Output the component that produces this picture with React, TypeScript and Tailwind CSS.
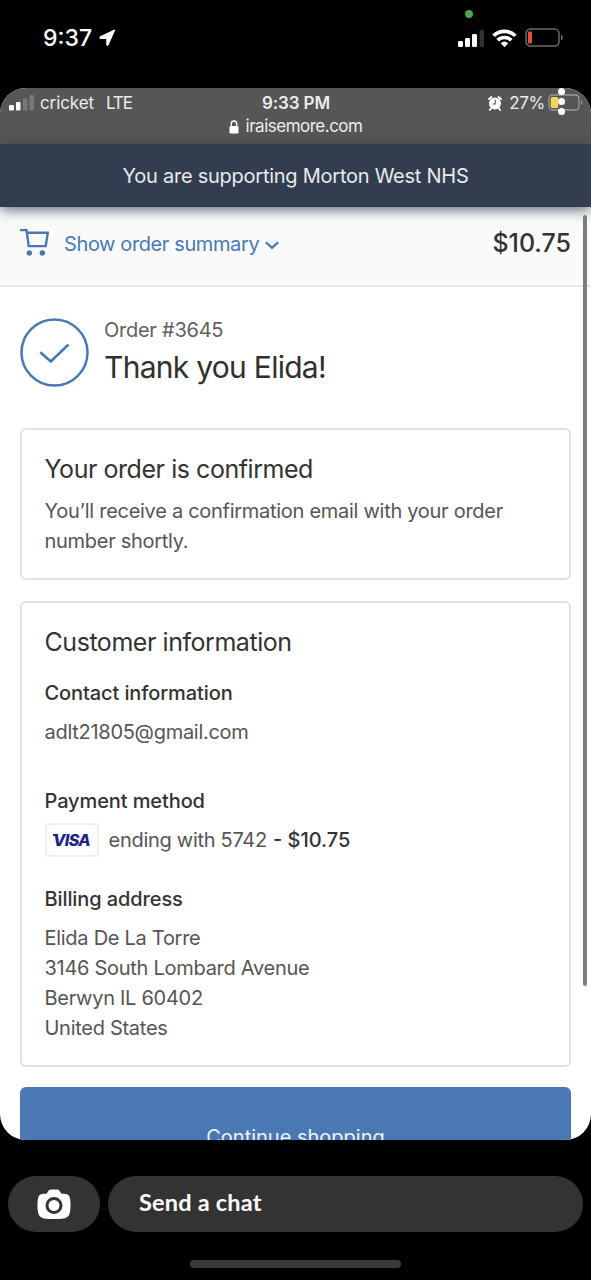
import type { ReactNode } from 'react';

const ADDRESS = ['Elida De La Torre', '3146 South Lombard Avenue', 'Berwyn IL 60402', 'United States'];

function PhoneStatusBar() {
    return (
        <div className="relative flex h-[88px] shrink-0 items-start justify-between pl-[43px] pr-[27px] pt-[23px] text-white">
            <div className="absolute left-[465px] top-[10px] h-[8px] w-[8px] rounded-full bg-[#4ca64c]" />
            <div className="flex h-[30px] items-center">
                <span className="text-[23px] font-medium">9:37</span>
                <svg className="ml-[7px] mt-[-1px]" width="17" height="17" viewBox="0 0 17 17">
                    <path d="M15.800.900 9 16.200H7.800V9.500H1V7.800Z" fill="#fff" stroke="#fff" strokeWidth="1" strokeLinejoin="round" />
                </svg>
            </div>
            <div className="flex h-[30px] items-center">
                <svg width="26" height="17" viewBox="0 0 26 17" fill="#fff">
                    <rect x="0" y="11" width="5" height="6" rx="1.200" />
                    <rect x="7" y="8" width="5" height="9" rx="1.200" />
                    <rect x="14" y="4" width="5" height="13" rx="1.200" />
                    <rect x="21.500" y="0" width="4.500" height="17" rx="1.200" fill="#333" />
                </svg>
                <svg className="ml-[8px]" width="25" height="19" viewBox="0 0 25 19" fill="none" stroke="#fff" strokeWidth="3.700">
                    <path d="M1.600 6.800a15.600 15.600 0 0 1 21.800 0" />
                    <path d="M5.700 11.300a9.700 9.700 0 0 1 13.600 0" />
                    <path d="M12.500 18.300 8.700 14.300a5.700 5.700 0 0 1 7.600 0Z" fill="#fff" stroke="none" />
                </svg>
                <svg className="ml-[8px] mt-[-1px]" width="39" height="19" viewBox="0 0 39 19">
                    <rect x="1" y="1" width="33" height="17" rx="4.500" fill="none" stroke="#6a6a6a" strokeWidth="1.500" />
                    <rect x="3" y="3.500" width="4" height="12" rx="1.200" fill="#ea4b3c" />
                    <path d="M36 6.500c2.200.8 2.200 5.200 0 6Z" fill="#6a6a6a" />
                </svg>
            </div>
        </div>
    );
}

function BrowserBar() {
    return (
        <div className="relative h-[56px] bg-[#565656] pt-[1px] text-[#ececec]">
            <div className="grid h-[29px] grid-cols-3 items-center pl-[9px] pr-[8px]">
                <div className="flex items-center text-[17px]">
                    <svg className="mt-[-2px]" width="25" height="16" viewBox="0 0 25 16" fill="#fff">
                        <rect x="0" y="10" width="5" height="5.500" rx="1" />
                        <rect x="7" y="7" width="4.500" height="8.500" rx="1" />
                        <rect x="14" y="3.500" width="4.500" height="12" rx="1" fill="#777" />
                        <rect x="20.500" y="0" width="4.500" height="15.500" rx="1" fill="#777" />
                    </svg>
                    <span className="ml-[6px] tracking-[-0.1px]">cricket</span>
                    <span className="ml-[12px] tracking-[-1.1px]">LTE</span>
                </div>
                <span className="text-center text-[17px] font-semibold tracking-[-0.1px]">9:33 PM</span>
                <div className="flex items-center justify-end text-[17px]">
                    <svg className="mt-[-1px]" width="14" height="15" viewBox="0 0 14 15">
                        <path d="M1 3 3.500 1M13 3 10.500 1M3 12.500 1.800 14M11 12.500l1.200 1.500" stroke="#fff" strokeWidth="1.800" strokeLinecap="round" />
                        <circle cx="7" cy="7.500" r="6" fill="#fff" />
                        <path d="M7.300 3.800v4.200H4.300" fill="none" stroke="#666" strokeWidth="1.200" />
                    </svg>
                    <span className="ml-[7px] tracking-[-0.3px]">27%</span>
                    <svg className="ml-[3px] mt-[-2px]" width="35" height="17" viewBox="0 0 35 17">
                        <rect x="1" y="1" width="30" height="15" rx="3.500" fill="none" stroke="#999" strokeWidth="1.300" />
                        <rect x="2.800" y="3" width="7.500" height="11" rx="1.500" fill="#f3d65a" />
                        <path d="M33 6c1.800.7 1.800 4.300 0 5Z" fill="#999" />
                    </svg>
                </div>
            </div>
            <div className="flex h-[18px] items-center justify-center text-[17px]">
                <svg className="mr-[7px]" width="10" height="14" viewBox="0 0 10 14">
                    <rect x="0.500" y="6" width="9" height="7.500" rx="1.300" fill="#fff" />
                    <path d="M2.300 6.500V3.700a2.700 2.700 0 0 1 5.400 0v2.800" fill="none" stroke="#fff" strokeWidth="1.300" />
                </svg>
                <span className="tracking-[-0.5px]">iraisemore.com</span>
            </div>
            {/* overflow menu dots sit above the battery */}
            <div className="absolute right-[26px] top-0 flex flex-col gap-[3px]">
                <i className="h-[7px] w-[7px] rounded-full bg-white" />
                <i className="h-[7px] w-[7px] rounded-full bg-white" />
                <i className="h-[7px] w-[7px] rounded-full bg-white" />
            </div>
        </div>
    );
}

function OrderSummary() {
    return (
        <div className="flex h-[80px] items-start justify-between border-b-2 border-[#e6e6e6] bg-[#fafafa] px-5 pt-[21px] leading-[30px]">
            <div className="flex items-center pt-[1px] text-[#4a78b5]">
                <svg width="29" height="29" viewBox="0 0 29 29" className="mt-[-4px]" fill="none" stroke="currentColor" strokeWidth="2.400">
                    <path d="M0 2.100h6.500l2.200 16h17l2.100-13.400H7" />
                    <circle cx="9.300" cy="25" r="2.700" fill="currentColor" stroke="none" />
                    <circle cx="22.300" cy="25" r="2.700" fill="currentColor" stroke="none" />
                </svg>
                <span className="ml-[15px] text-[20px] tracking-[-0.39px]">Show order summary</span>
                <svg className="ml-[6px] mt-[2px]" width="14" height="9" viewBox="0 0 14 9" fill="none" stroke="currentColor" strokeWidth="2.300">
                    <path d="m.8 1.300 6.200 5.500 6.200-5.500" />
                </svg>
            </div>
            <span className="text-[25px] font-medium text-[#333]">$10.75</span>
        </div>
    );
}

type CardProps = { title: ReactNode; children: ReactNode; className: string };

function Card({ title, children, className }: CardProps) {
    return (
        <section className={`mx-5 rounded-[6px] border-2 border-[#e2e2e2] px-[22.5px] pt-[24px] ${className}`}>
            <h2 className="text-[25px] tracking-[-0.45px] text-[#333]">{title}</h2>
            {children}
        </section>
    );
}

function VisaBadge() {
    return (
        <span className="relative flex h-[34px] w-[54px] items-center justify-center rounded-[4px] border-2 border-[#f0f0f0] text-[16px] font-extrabold italic tracking-[-0.6px] text-[#1c2382]">
            VISA
            <i className="absolute left-[6px] top-[9px] h-[2px] w-[5px] bg-[#1c2382]" />
        </span>
    );
}

export default function App() {
    return (
        <div className="flex h-[1280px] w-[591px] flex-col overflow-hidden bg-black font-['Inter',sans-serif]">
            <PhoneStatusBar />

            <main className="relative h-[1052px] shrink-0 overflow-hidden rounded-[26px] bg-white">
                <BrowserBar />
                <header className="relative flex h-[63px] items-center justify-center bg-[#323e4f] text-[20px] tracking-[-0.25px] text-[#e8eaed] shadow-[0_3px_12px_rgba(50,62,79,0.75)]">
                    You are supporting Morton West NHS
                </header>
                <OrderSummary />

                <div className="flex h-[141px] items-start px-5 pt-[31px]">
                    <svg width="69" height="69" viewBox="0 0 69 69" fill="none" stroke="#4a78b5">
                        <circle cx="34.500" cy="34.500" r="33" strokeWidth="2.500" />
                        <path d="M20.300 34.300 30.800 43.500 48.500 26.500" strokeWidth="2.600" />
                    </svg>
                    <div className="ml-[15px] mt-[-3px]">
                        <p className="text-[20px] leading-[30px] tracking-[-0.26px] text-[#606060]">Order #3645</p>
                        <h1 className="text-[30px] leading-[44px] tracking-[-0.72px] text-[#303030]">Thank you Elida!</h1>
                    </div>
                </div>

                <div className="text-[20px] leading-[30px] tracking-[-0.28px] text-[#555]">
                    <Card title="Your order is confirmed" className="h-[152px]">
                        <p className="mt-[12px] whitespace-nowrap">
                            You’ll receive a confirmation email with your order
                            <br />
                            number shortly.
                        </p>
                    </Card>

                    <Card title="Customer information" className="mt-[21px] h-[466px]">
                        <h3 className="mt-[21px] font-medium tracking-[-0.1px] text-[#333]">Contact information</h3>
                        <p className="mt-[9px]">adlt21805@gmail.com</p>
                        <h3 className="mt-[39px] font-medium tracking-[-0.1px] text-[#333]">Payment method</h3>
                        <div className="mt-[7px] flex h-[34px] items-center">
                            <VisaBadge />
                            <span className="ml-[10px]">ending with 5742</span>
                            <span className="ml-[6px] font-medium tracking-normal text-[#333]">- $10.75</span>
                        </div>
                        <h3 className="mt-[27px] font-medium tracking-[-0.1px] text-[#333]">Billing address</h3>
                        <address className="mt-[9px] not-italic">
                            {ADDRESS.map((line) => (
                                <div key={line}>{line}</div>
                            ))}
                        </address>
                    </Card>

                    {/* runs past the bottom of the visible screen */}
                    <button className="mx-5 mt-[20px] block h-[100px] w-[551px] rounded-[6px] bg-[#4a78b3] text-[20px] tracking-normal text-[#edf3fa]">
                        Continue shopping
                    </button>
                </div>

                {/* scroll indicator */}
                <div className="absolute right-[4px] top-[127px] h-[771px] w-[4.500px] rounded-full bg-[#7d7d7d]" />
            </main>

            <footer className="mt-[36px] flex h-[56px] shrink-0 gap-[8px] pl-[8px] pr-[8px]">
                <button className="flex w-[92px] items-center justify-center rounded-full bg-[#333]">
                    <svg className="mt-[-1px]" width="34" height="30" viewBox="0 0 34 30">
                        <path
                            fill="#fff"
                            d="M9.500 4.500C11 3.800 11 .5 14 .5h6c3 0 3 3.300 4.500 4 2.500.6 5.500-.2 7.500 2.200C34 9.500 34 21 32.300 25.500 30.500 30 24 30 17 30S3.500 30 1.700 25.500C0 21 0 9.500 2 6.700c2-2.400 5-1.600 7.500-2.200Z"
                        />
                        <circle cx="17" cy="16.500" r="7" fill="#fff" stroke="#333" strokeWidth="3" />
                    </svg>
                </button>
                <div className="flex flex-1 items-center rounded-full bg-[#333] pb-[2px] pl-[31px] font-['Lato',sans-serif] text-[23.500px] font-bold tracking-[0.2px] text-white">
                    Send a chat
                </div>
            </footer>
            <div className="mx-auto mt-[28px] h-[8px] w-[211px] shrink-0 rounded-full bg-[#3a3a3a]" />
        </div>
    );
}
